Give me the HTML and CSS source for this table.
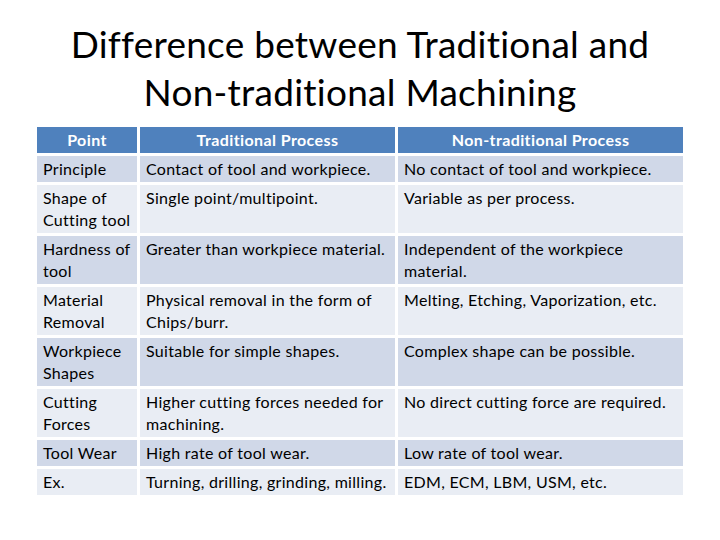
FILE: index.html
```html
<!DOCTYPE html>
<html>
<head>
<meta charset="utf-8">
<link rel="stylesheet" href="styles.css">
</head>
<body>
<h1 class="title">Difference between Traditional and<br>Non-traditional Machining</h1>
<div class="table">
  <div class="cell head">Point</div>
  <div class="cell head">Traditional Process</div>
  <div class="cell head">Non-traditional Process</div>

  <div class="cell dark">Principle</div>
  <div class="cell dark">Contact of tool and workpiece.</div>
  <div class="cell dark">No contact of tool and workpiece.</div>

  <div class="cell light">Shape of Cutting tool</div>
  <div class="cell light">Single point/multipoint.</div>
  <div class="cell light">Variable as per process.</div>

  <div class="cell dark">Hardness of tool</div>
  <div class="cell dark">Greater than workpiece material.</div>
  <div class="cell dark">Independent of the workpiece material.</div>

  <div class="cell light">Material Removal</div>
  <div class="cell light">Physical removal in the form of Chips/burr.</div>
  <div class="cell light">Melting, Etching, Vaporization, etc.</div>

  <div class="cell dark">Workpiece Shapes</div>
  <div class="cell dark">Suitable for simple shapes.</div>
  <div class="cell dark">Complex shape can be possible.</div>

  <div class="cell light">Cutting Forces</div>
  <div class="cell light">Higher cutting forces needed for machining.</div>
  <div class="cell light">No direct cutting force are required.</div>

  <div class="cell dark">Tool Wear</div>
  <div class="cell dark">High rate of tool wear.</div>
  <div class="cell dark">Low rate of tool wear.</div>

  <div class="cell light">Ex.</div>
  <div class="cell light">Turning, drilling, grinding, milling.</div>
  <div class="cell light">EDM, ECM, LBM, USM, etc.</div>
</div>
</body>
</html>
```
FILE: styles.css
```css
html, body {
  margin: 0;
  padding: 0;
  background: #ffffff;
}
body {
  font-family: Lato, "Liberation Sans", sans-serif;
  color: #000000;
  font-variant-ligatures: none;
}
.title {
  margin: 0;
  padding-top: 20px;
  font-weight: normal;
  font-size: 37px;
  letter-spacing: 0.25px;
  line-height: 48px;
  text-align: center;
  color: #000000;
}
.table {
  margin: 11px 0 0 37px;
  width: 646px;
  display: grid;
  grid-template-columns: 100px 255px 285px;
  gap: 3px;
}
.cell {
  padding: 2px 2px 2px 6px;
  font-size: 16px;
  letter-spacing: 0.3px;
  line-height: 22px;
}
.head {
  background: #4f81bd;
  color: #ffffff;
  font-weight: bold;
  text-align: center;
  letter-spacing: 0.4px;
  padding: 2px 4px;
}
.dark {
  background: #d0d8e8;
}
.light {
  background: #e9edf4;
}
```
